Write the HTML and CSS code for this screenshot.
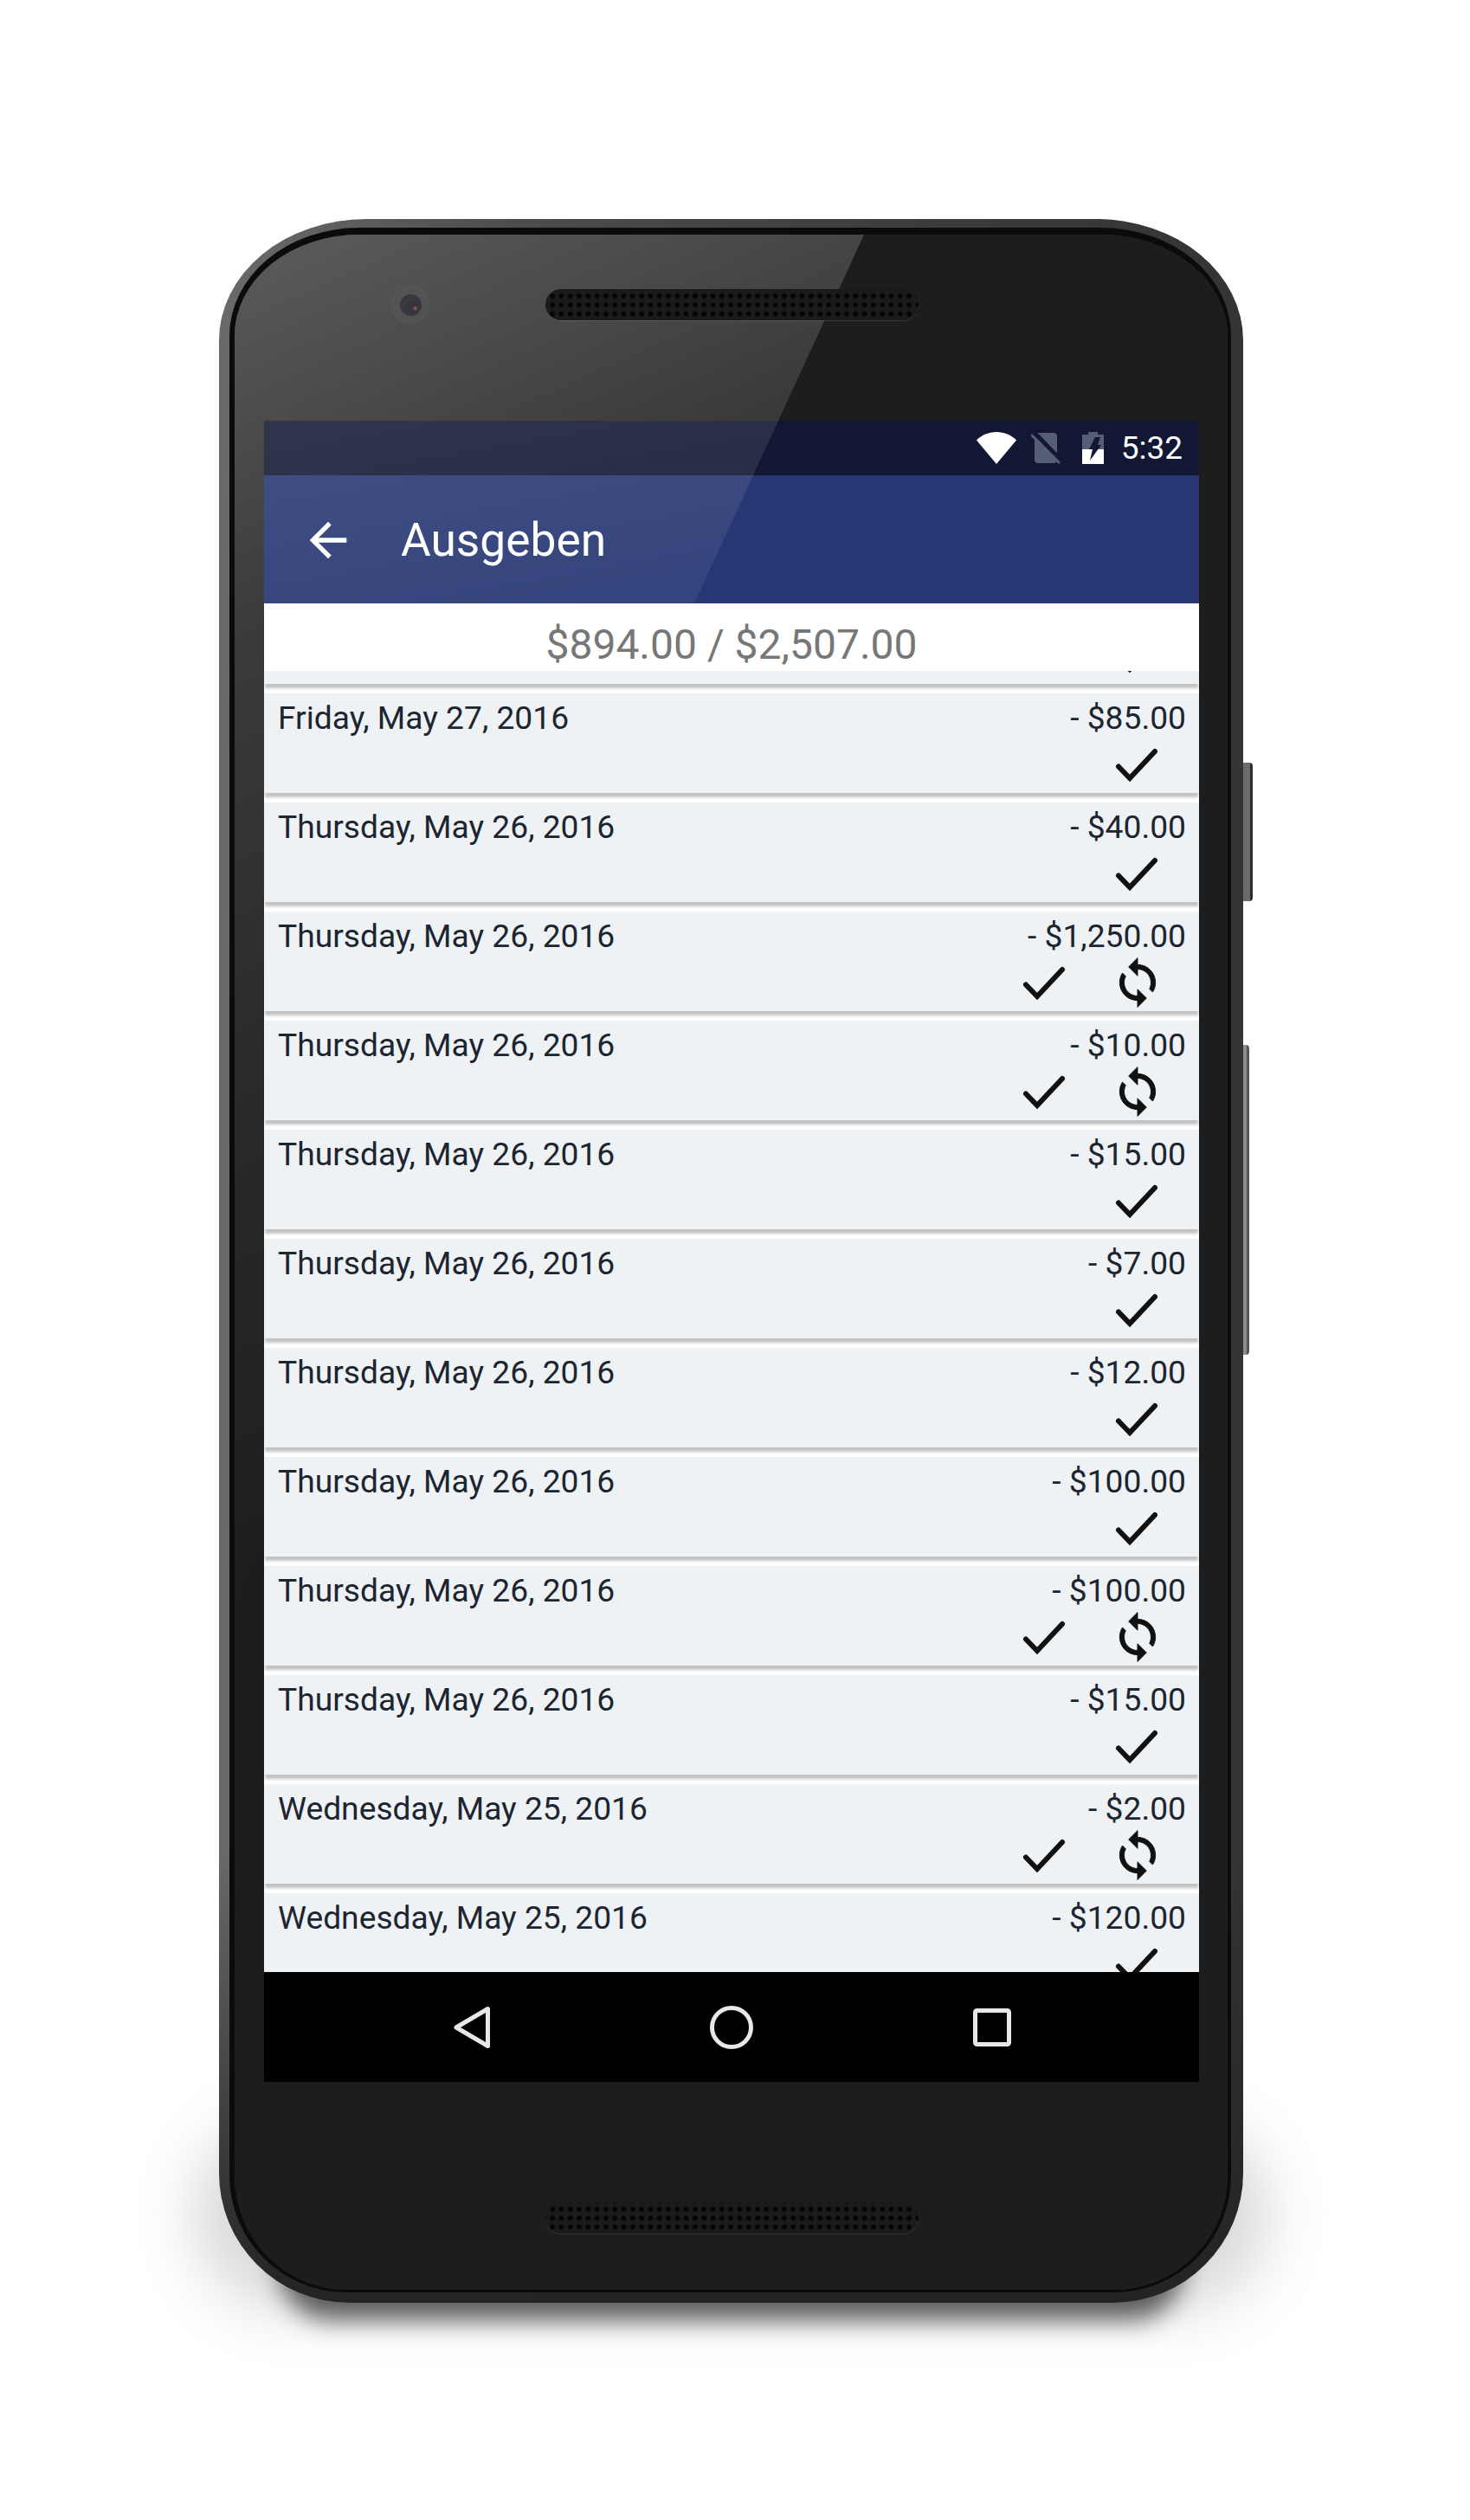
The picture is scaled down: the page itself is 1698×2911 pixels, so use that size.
FILE: index.html
```html
<!DOCTYPE html>
<html lang="en">
<head>
    <meta charset="UTF-8">
    <title>Ausgeben</title>
    <link rel="stylesheet" href="styles.css">
</head>
<body>
    <svg class="defs" width="0" height="0">
        <symbol id="icon-check" viewBox="0 0 62 62">
            <path d="M9 33.5L22 47 51 16" fill="none" stroke="#111" stroke-width="6" stroke-linecap="round" stroke-linejoin="miter"/>
        </symbol>
        <symbol id="icon-sync" viewBox="0 0 24 24">
            <path fill="#111" stroke="#111" stroke-width="0.35" d="M12 4V1L8 5l4 4V6c3.31 0 6 2.69 6 6 0 1.01-.25 1.97-.7 2.8l1.46 1.46C19.54 15.03 20 13.57 20 12c0-4.42-3.58-8-8-8zm0 14c-3.31 0-6-2.69-6-6 0-1.01.25-1.97.7-2.8L5.24 7.74C4.46 8.97 4 10.43 4 12c0 4.42 3.58 8 8 8v3l4-4-4-4v3z"/>
        </symbol>
    </svg>

    <div class="phone">
        <div class="button-power"></div>
        <div class="button-volume"></div>
        <div class="shadow-wide"></div>
        <div class="shadow-near"></div>

        <div class="frame">
            <div class="bezel">
                <div class="gloss"></div>

                <div class="bezel-top">
                    <div class="camera"><div class="lens"></div></div>
                    <div class="speaker"></div>
                </div>

                <div class="screen">
                    <div class="header">
                        <div class="status-bar">
                            <svg class="status-wifi" width="46" height="37" viewBox="0 0 46 37">
                                <path d="M23 37L0 9.5C6 3.5 14 0 23 0s17 3.5 23 9.5z" fill="#fff"/>
                            </svg>
                            <svg class="status-sim" width="34" height="37" viewBox="0 0 34 37">
                                <rect x="4" y="1" width="26" height="35" rx="4" fill="#565e75"/>
                                <path d="M3 0l32 33" stroke="#121733" stroke-width="5" fill="none"/>
                                <path d="M0 3l33 33" stroke="#565e75" stroke-width="3" fill="none"/>
                            </svg>
                            <svg class="status-battery" width="25" height="37" viewBox="0 0 25 37">
                                <path d="M7 0h11v3h7v17H0V3h7z" fill="#565e75"/>
                                <path d="M0 20h25v17H0z" fill="#fff"/>
                                <path d="M15 6h6l-3 9h4L9 33l3-13H8z" fill="#121733"/>
                            </svg>
                            <span class="status-time">5:32</span>
                        </div>
                        <div class="app-bar">
                            <svg class="back-arrow" width="64" height="64" viewBox="0 0 24 24">
                                <path d="M20 11H7.83l5.59-5.59L12 4l-8 8 8 8 1.41-1.41L7.83 13H20v-2z" fill="#fff"/>
                            </svg>
                            <span class="app-title">Ausgeben</span>
                        </div>
                        <div class="header-gloss"></div>
                    </div>

                    <div class="summary">$894.00 / $2,507.00</div>

                    <div class="list-clip">
                        <div class="list">
                            <div class="row">
                                <div class="row-text"></div>
                                <div class="row-icons">
                                    <svg class="icon"><use href="#icon-check"/></svg>
                                </div>
                            </div>
                            <div class="row">
                                <div class="row-text"><span>Friday, May 27, 2016</span><span>- $85.00</span></div>
                                <div class="row-icons">
                                    <svg class="icon"><use href="#icon-check"/></svg>
                                </div>
                            </div>
                            <div class="row">
                                <div class="row-text"><span>Thursday, May 26, 2016</span><span>- $40.00</span></div>
                                <div class="row-icons">
                                    <svg class="icon"><use href="#icon-check"/></svg>
                                </div>
                            </div>
                            <div class="row">
                                <div class="row-text"><span>Thursday, May 26, 2016</span><span>- $1,250.00</span></div>
                                <div class="row-icons">
                                    <svg class="icon"><use href="#icon-check"/></svg>
                                    <svg class="icon"><use href="#icon-sync"/></svg>
                                </div>
                            </div>
                            <div class="row">
                                <div class="row-text"><span>Thursday, May 26, 2016</span><span>- $10.00</span></div>
                                <div class="row-icons">
                                    <svg class="icon"><use href="#icon-check"/></svg>
                                    <svg class="icon"><use href="#icon-sync"/></svg>
                                </div>
                            </div>
                            <div class="row">
                                <div class="row-text"><span>Thursday, May 26, 2016</span><span>- $15.00</span></div>
                                <div class="row-icons">
                                    <svg class="icon"><use href="#icon-check"/></svg>
                                </div>
                            </div>
                            <div class="row">
                                <div class="row-text"><span>Thursday, May 26, 2016</span><span>- $7.00</span></div>
                                <div class="row-icons">
                                    <svg class="icon"><use href="#icon-check"/></svg>
                                </div>
                            </div>
                            <div class="row">
                                <div class="row-text"><span>Thursday, May 26, 2016</span><span>- $12.00</span></div>
                                <div class="row-icons">
                                    <svg class="icon"><use href="#icon-check"/></svg>
                                </div>
                            </div>
                            <div class="row">
                                <div class="row-text"><span>Thursday, May 26, 2016</span><span>- $100.00</span></div>
                                <div class="row-icons">
                                    <svg class="icon"><use href="#icon-check"/></svg>
                                </div>
                            </div>
                            <div class="row">
                                <div class="row-text"><span>Thursday, May 26, 2016</span><span>- $100.00</span></div>
                                <div class="row-icons">
                                    <svg class="icon"><use href="#icon-check"/></svg>
                                    <svg class="icon"><use href="#icon-sync"/></svg>
                                </div>
                            </div>
                            <div class="row">
                                <div class="row-text"><span>Thursday, May 26, 2016</span><span>- $15.00</span></div>
                                <div class="row-icons">
                                    <svg class="icon"><use href="#icon-check"/></svg>
                                </div>
                            </div>
                            <div class="row">
                                <div class="row-text"><span>Wednesday, May 25, 2016</span><span>- $2.00</span></div>
                                <div class="row-icons">
                                    <svg class="icon"><use href="#icon-check"/></svg>
                                    <svg class="icon"><use href="#icon-sync"/></svg>
                                </div>
                            </div>
                            <div class="row">
                                <div class="row-text"><span>Wednesday, May 25, 2016</span><span>- $120.00</span></div>
                                <div class="row-icons">
                                    <svg class="icon"><use href="#icon-check"/></svg>
                                </div>
                            </div>
                        </div>
                    </div>

                    <div class="nav-bar">
                        <svg width="60" height="60" viewBox="0 0 60 60">
                            <path d="M49.5 8.500v43L13 30z" fill="none" stroke="#e8e8e8" stroke-width="5" stroke-linejoin="round"/>
                        </svg>
                        <svg width="60" height="60" viewBox="0 0 60 60">
                            <circle cx="30" cy="30" r="22.5" fill="none" stroke="#e8e8e8" stroke-width="5"/>
                        </svg>
                        <svg width="60" height="60" viewBox="0 0 60 60">
                            <rect x="10.5" y="10.5" width="39" height="39" rx="2" fill="none" stroke="#e8e8e8" stroke-width="5"/>
                        </svg>
                    </div>
                </div>

                <div class="bezel-bottom">
                    <div class="speaker"></div>
                </div>
            </div>
        </div>
    </div>
</body>
</html>
```

FILE: styles.css
```css
body {
    margin: 0;
    height: 2911px;
    background: #fff;
    font-family: Roboto, sans-serif;
    overflow: hidden;
}
.defs {
    display: block;
    height: 0;
}

/* phone body */
.phone {
    position: relative;
    box-sizing: border-box;
    width: 1183px;
    height: 2407px;
    margin: 253px 0 0 253px;
    padding: 10px 14px 12px 12px;
    border-radius: 170px 170px 150px 150px / 140px 140px 150px 150px;
    background:
        linear-gradient(to bottom, transparent 78%, #232323 100%),
        linear-gradient(to right, #6a6a6a 0, #4c4c4c 30%, #3c3c3c 70%, #343434 100%);
}
.shadow-near, .shadow-wide {
    position: absolute;
    z-index: -1;
    border-radius: 120px;
}
.shadow-near {
    left: 70px;
    right: 70px;
    bottom: -20px;
    height: 120px;
    background: rgba(0, 0, 0, 0.6);
    filter: blur(14px);
}
.shadow-wide {
    left: -30px;
    right: -30px;
    bottom: -8px;
    height: 220px;
    background: rgba(0, 0, 0, 0.15);
    filter: blur(34px);
}
.button-power, .button-volume {
    position: absolute;
    left: 100%;
    border-radius: 0 4px 4px 0;
}
.button-power {
    top: 628px;
    width: 11px;
    height: 160px;
    background: linear-gradient(to right, #6c6c6c 70%, #2c2c2c 70%);
}
.button-volume {
    top: 954px;
    width: 7px;
    height: 358px;
    background: linear-gradient(to right, #8c8c8c 60%, #555 60%);
}
.frame {
    height: 100%;
    box-sizing: border-box;
    border: solid #0b0b0b;
    border-width: 8px 4px 3px 6px;
    border-radius: 150px 150px 135px 135px / 125px 125px 135px 135px;
    overflow: hidden;
}
.bezel {
    position: relative;
    height: 100%;
    box-sizing: border-box;
    padding: 0 33px 0 34px;
    background: #1d1d1d;
}
.gloss {
    position: absolute;
    top: 0;
    left: 0;
    width: 727px;
    height: 1580px;
    clip-path: polygon(0 0, 100% 0, 0 100%);
    background: linear-gradient(156deg, rgba(255, 255, 255, 0.28) 0, rgba(255, 255, 255, 0.13) 25%, rgba(255, 255, 255, 0.05) 55%, rgba(255, 255, 255, 0) 85%);
}

/* earpiece and camera */
.bezel-top {
    position: relative;
    display: flex;
    align-items: center;
    gap: 134px;
    height: 162px;
    margin-bottom: 53px;
    padding-left: 147px;
}
.camera {
    display: flex;
    align-items: center;
    justify-content: center;
    width: 44px;
    height: 44px;
    border-radius: 50%;
    background: rgba(255, 255, 255, 0.02);
    box-shadow: inset 0 0 0 1px rgba(255, 255, 255, 0.04);
}
.lens {
    width: 25px;
    height: 25px;
    border-radius: 50%;
    background: radial-gradient(circle at 70% 65%, #a0605a 0, #35333b 14%, #3a3940 60%, #2c2c2c 100%);
}
.speaker {
    width: 431px;
    height: 36px;
    box-sizing: border-box;
    border-radius: 18px;
    background-color: #1b1b1b;
    background-image: radial-gradient(circle, #050505 2.5px, transparent 3.5px);
    background-size: 10.3px 10.3px;
    background-position: 3px 2.8px;
    box-shadow: 0 1px 0 rgba(255, 255, 255, 0.12);
}
.bezel-bottom {
    display: flex;
    justify-content: center;
    padding-top: 139px;
}

/* screen */
.screen {
    position: relative;
    display: flex;
    flex-direction: column;
    width: 1080px;
    height: 1919px;
    background: #fff;
}
.header {
    position: relative;
}
.header-gloss {
    position: absolute;
    top: 0;
    left: 0;
    width: 594px;
    height: 211px;
    clip-path: polygon(0 0, 100% 0, 497px 100%, 0 100%);
    background: linear-gradient(170deg, rgba(255, 255, 255, 0.13), rgba(255, 255, 255, 0.06));
}
.status-bar {
    display: flex;
    align-items: center;
    justify-content: flex-end;
    height: 63px;
    padding-right: 19px;
    background: #121733;
    color: #fff;
}
.status-sim {
    margin-left: 17px;
}
.status-battery {
    margin-left: 25px;
}
.status-time {
    margin-left: 20px;
    font-size: 37px;
}
.app-bar {
    display: flex;
    align-items: center;
    height: 148px;
    padding-top: 2px;
    box-sizing: border-box;
    background: #263773;
    color: #fff;
}
.back-arrow {
    margin-left: 42px;
}
.app-title {
    margin-left: 52px;
    font-size: 53.3px;
}
.summary {
    box-sizing: border-box;
    height: 78px;
    padding-top: 9px;
    line-height: 78px;
    text-align: center;
    color: #777;
    font-size: 48px;
    background: #fff;
}

/* rows */
.list-clip {
    height: 1503px;
    overflow: hidden;
    background: #fff;
}
.list {
    margin-top: -100px;
}
.row {
    height: 115px;
    margin-bottom: 11px;
    background: #eef2f5;
    box-shadow: 0 6px 3px -1px rgba(0, 0, 0, 0.24);
}
.row-text {
    display: flex;
    justify-content: space-between;
    height: 51px;
    padding: 6px 15px 0 16px;
    box-sizing: border-box;
    line-height: 44px;
    font-size: 37.2px;
    color: #1c2530;
}
.row-icons {
    display: flex;
    justify-content: flex-end;
    gap: 45px;
    padding-right: 40px;
}
.icon {
    width: 62px;
    height: 62px;
}

.nav-bar {
    display: flex;
    align-items: center;
    justify-content: center;
    gap: 241px;
    height: 127px;
    background: #000;
}
```
